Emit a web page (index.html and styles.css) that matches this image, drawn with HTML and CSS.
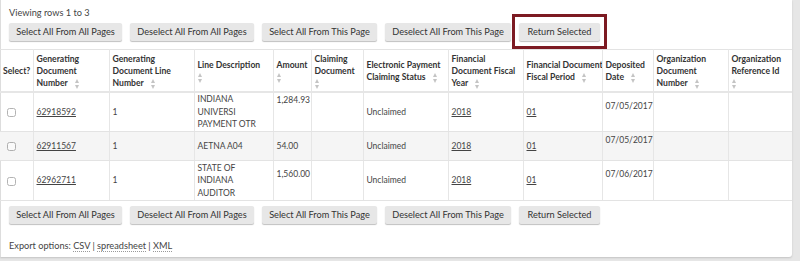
FILE: index.html
```html
<!DOCTYPE html>
<html lang="en">
<head>
  <meta charset="UTF-8">
  <title>Electronic Payments</title>
  <link rel="stylesheet" href="styles.css">
</head>
<body>
  <div class="panel">
    <div class="info">Viewing rows 1 to 3</div>

    <div class="actions">
      <button>Select All From All Pages</button>
      <button>Deselect All From All Pages</button>
      <button>Select All From This Page</button>
      <button>Deselect All From This Page</button>
      <button class="marked">Return Selected</button>
    </div>

    <table class="results">
      <colgroup>
        <col style="width:33px"><col style="width:76px"><col style="width:85px"><col style="width:79px">
        <col style="width:38px"><col style="width:52px"><col style="width:85px"><col style="width:75px">
        <col style="width:79px"><col style="width:51px"><col style="width:75px"><col style="width:64px">
      </colgroup>
      <thead>
        <tr>
          <th>Select?</th>
          <th>Generating<br>Document<br>Number<i class="sort"></i></th>
          <th>Generating<br>Document Line<br>Number<i class="sort"></i></th>
          <th>Line Description<br><i class="sort first"></i></th>
          <th>Amount<br><i class="sort first"></i></th>
          <th>Claiming<br>Document<br><i class="sort first"></i></th>
          <th>Electronic Payment<br>Claiming Status<i class="sort"></i></th>
          <th>Financial<br>Document Fiscal<br>Year<i class="sort"></i></th>
          <th>Financial Document<br>Fiscal Period<i class="sort"></i></th>
          <th>Deposited<br>Date<i class="sort"></i></th>
          <th>Organization<br>Document<br>Number<i class="sort"></i></th>
          <th>Organization<br>Reference Id<br><i class="sort first"></i></th>
        </tr>
      </thead>
      <tbody>
        <tr class="r1">
          <td class="check"><input type="checkbox"></td>
          <td><a href="#">62918592</a></td>
          <td>1</td>
          <td>INDIANA UNIVERSI PAYMENT OTR</td>
          <td class="top">1,284.93</td>
          <td></td>
          <td>Unclaimed</td>
          <td><a href="#">2018</a></td>
          <td><a href="#">01</a></td>
          <td>07/05/2017<br>&nbsp;</td>
          <td></td>
          <td></td>
        </tr>
        <tr class="r2">
          <td class="check"><input type="checkbox"></td>
          <td><a href="#">62911567</a></td>
          <td>1</td>
          <td>AETNA A04</td>
          <td>54.00</td>
          <td></td>
          <td>Unclaimed</td>
          <td><a href="#">2018</a></td>
          <td><a href="#">01</a></td>
          <td>07/05/2017<br>&nbsp;</td>
          <td></td>
          <td></td>
        </tr>
        <tr class="r3">
          <td class="check"><input type="checkbox"></td>
          <td><a href="#">62962711</a></td>
          <td>1</td>
          <td>STATE OF INDIANA AUDITOR</td>
          <td>1,560.00<br>&nbsp;</td>
          <td></td>
          <td>Unclaimed</td>
          <td><a href="#">2018</a></td>
          <td><a href="#">01</a></td>
          <td>07/06/2017<br>&nbsp;</td>
          <td></td>
          <td></td>
        </tr>
      </tbody>
    </table>

    <div class="actions bottom">
      <button>Select All From All Pages</button>
      <button>Deselect All From All Pages</button>
      <button>Select All From This Page</button>
      <button>Deselect All From This Page</button>
      <button>Return Selected</button>
    </div>

    <div class="export">Export options: <a href="#">CSV</a> | <a href="#">spreadsheet</a> | <a href="#">XML</a></div>
  </div>
</body>
</html>
```

FILE: styles.css
```css
body { margin: 0; background: #e6e6e6; font-family: Lato, "Open Sans", sans-serif; font-size: 9.2px; color: #444; height: 261px; overflow: hidden; }
.panel { width: 791px; height: 257px; background: #fff; border-left: 1px solid #ddd; border-bottom-right-radius: 3px; box-shadow: 0 1px 2px rgba(0,0,0,0.15); }
.info { padding: 7px 0 0 8px; height: 16px; line-height: 12px; }
.actions { display: flex; gap: 8px; padding-left: 8px; height: 26px; align-items: flex-start; }
.actions.bottom { padding-top: 5px; height: 25px; }
button { font-family: inherit; font-size: 9.2px; color: #333; background: #e7e7e7; border: none; border-radius: 2px; box-shadow: 0 1px 1px rgba(0,0,0,0.25); height: 18px; padding: 0; line-height: 18px; white-space: nowrap; }
button:nth-child(1) { width: 113px; }
button:nth-child(2) { width: 124px; }
button:nth-child(3) { width: 115px; }
button:nth-child(4) { width: 126px; }
button:nth-child(5) { width: 81px; }
.marked { position: relative; }
.marked::after { content: ""; position: absolute; top: -9px; bottom: -8px; left: -7px; right: -7px; border: 3px solid #7c1a22; }
.results { border-collapse: collapse; table-layout: fixed; width: 792px; margin-left: -1px; border-top: 1px solid #e3e3e3; }
.results th { font-weight: bold; font-size: 8.6px; color: #333; text-align: left; vertical-align: middle; line-height: 12px; padding: 3px 2px 2px 3px; height: 33px; white-space: nowrap; overflow: hidden; border-left: 1px solid #e6e6e6; border-bottom: 2px solid #e6e6e6; }
.results th:first-child { border-left: none; }
.results td { font-size: 8.5px; vertical-align: middle; line-height: 12.5px; padding: 0 3px; border-left: 1px solid #e6e6e6; border-bottom: 1px solid #e3e3e3; }
.results td:first-child { border-left: none; }
.results tr.r1 td { height: 37px; }
.results tr.r2 td { height: 28px; background: #f5f5f5; }
.results tr.r3 td { height: 39px; }
.results td.top { vertical-align: top; padding-top: 1px; }
.results td.check { padding-left: 7px; }
.results a { color: #444; text-decoration: underline; }
input[type=checkbox] { width: 9px; height: 9px; margin: 0; vertical-align: middle; opacity: 0.55; }
.sort { display: inline-block; width: 5px; height: 10px; margin-left: 7px; vertical-align: -3px; position: relative; }
.sort::before, .sort::after { content: ""; position: absolute; left: 0; border-left: 2.5px solid transparent; border-right: 2.5px solid transparent; }
.sort::before { top: 0; border-bottom: 4px solid #c4c4c4; }
.sort::after { bottom: 0; border-top: 4px solid #c4c4c4; }
.sort.first { margin-left: 0; }
.export { padding: 9px 0 0 8px; }
.export a { color: #444; text-decoration: none; border-bottom: 1px dotted #999; }
```
